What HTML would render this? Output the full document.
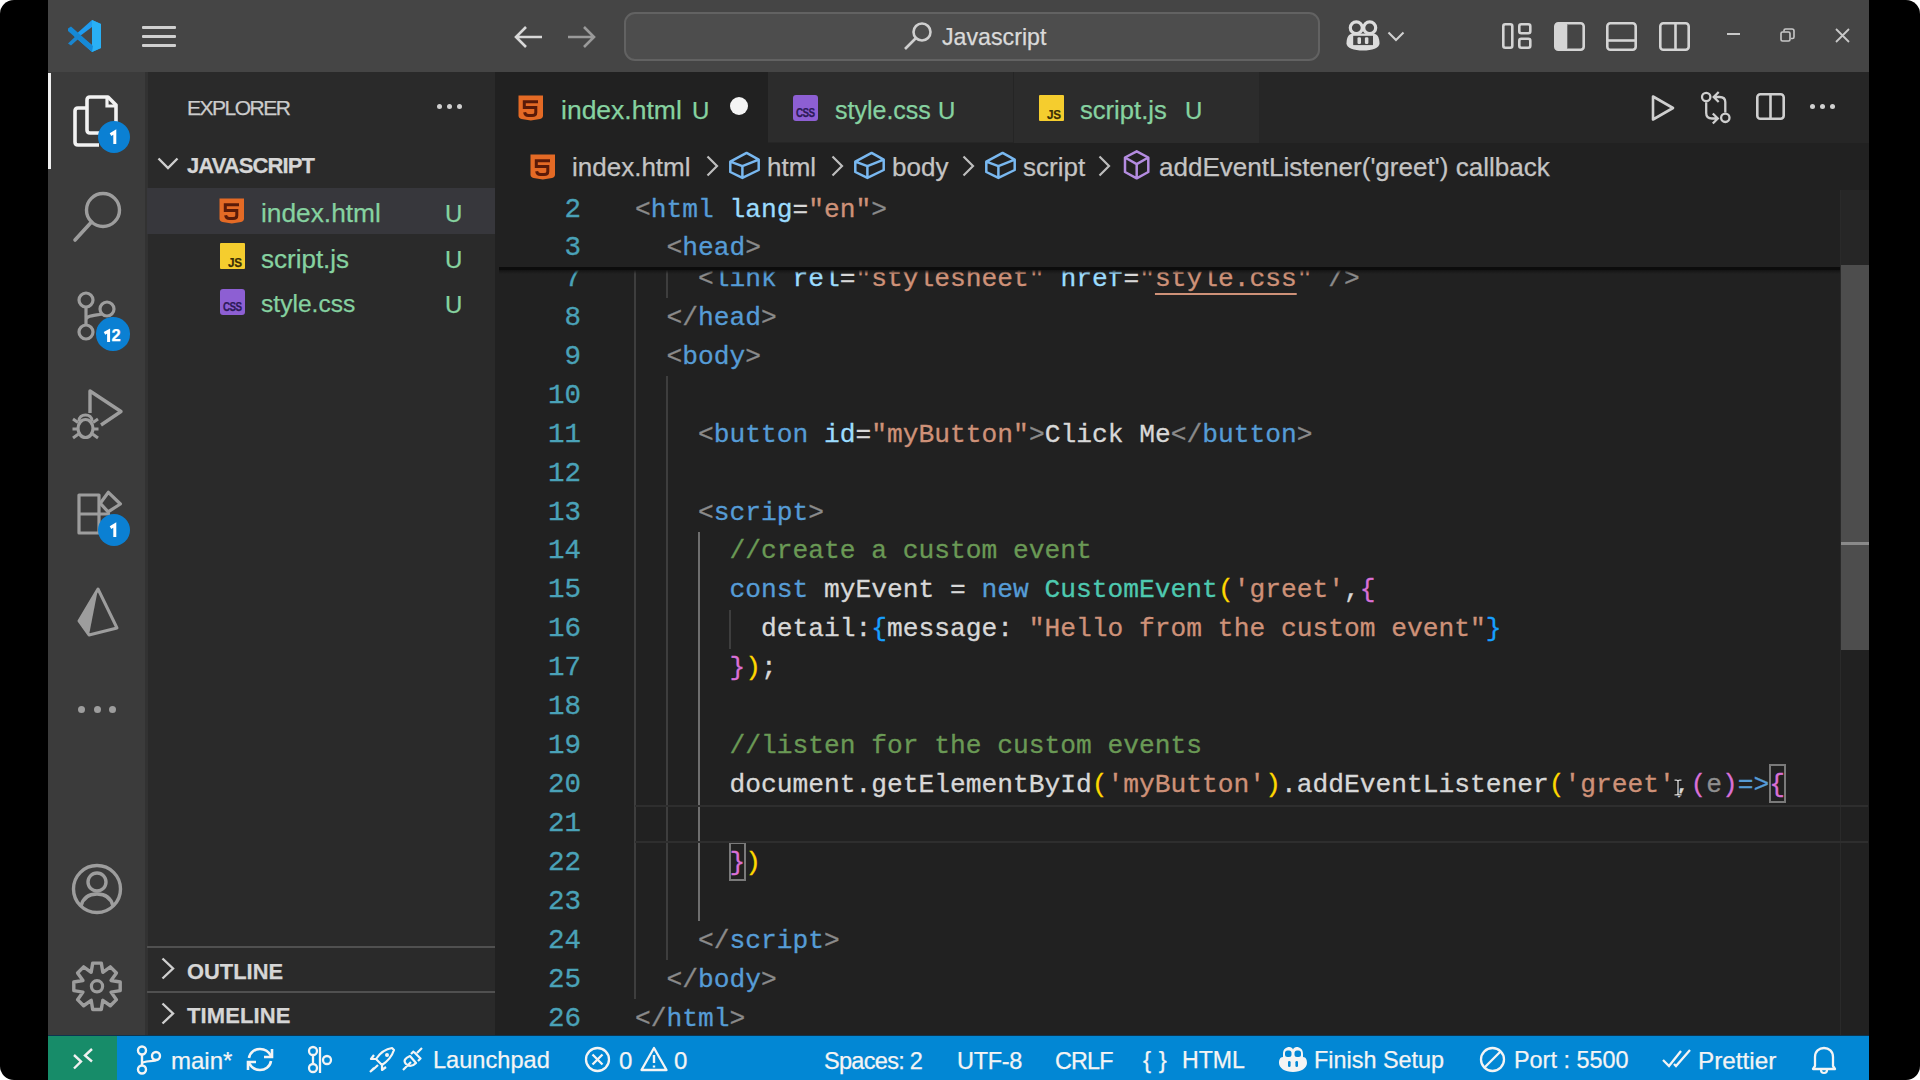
<!DOCTYPE html>
<html><head><meta charset="utf-8">
<style>
*{margin:0;padding:0;box-sizing:border-box}
html,body{width:1920px;height:1080px;overflow:hidden;background:#fff}
body{position:relative;font-family:"Liberation Sans",sans-serif}
.abs{position:absolute}
#frame{position:absolute;left:0;top:0;width:1920px;height:1080px;background:#000;border-radius:14px;overflow:hidden}
#title{left:48px;top:0;width:1821px;height:72px;background:#454545}
#act{left:48px;top:72px;width:99px;height:964px;background:#3b3b3b}
#side{left:147px;top:72px;width:348px;height:964px;background:#2a2a2a}
#tabs{left:495px;top:72px;width:1374px;height:71px;background:#262626}
#editor{left:495px;top:143px;width:1374px;height:893px;background:#212121}
#status{left:48px;top:1036px;width:1821px;height:44px;background:#0287d4}
.t{position:absolute;white-space:nowrap;line-height:1;-webkit-text-stroke:0.25px}
svg{position:absolute;overflow:visible}
.code{position:absolute;font-family:"Liberation Mono",monospace;font-size:26.26px;white-space:pre;line-height:39px;height:39px;margin-top:0.5px;-webkit-text-stroke:0.3px}
.ln{position:absolute;font-family:"Liberation Mono",monospace;font-size:27.5px;white-space:pre;line-height:39px;height:39px;text-align:right;width:80px;left:501px;margin-top:-0.5px;color:#4aa2b8;-webkit-text-stroke:0.3px}
.p{color:#8a8a8a}.tg{color:#569cd6}.at{color:#9cdcfe}.s{color:#ce9178}.w{color:#d8d8d8}.c{color:#6a9955}.k{color:#569cd6}.cl{color:#4ec9b0}.y{color:#ffd700}.m{color:#da70d6}.b{color:#179fff}.g{color:#8f8f8f}.su{color:#ce9178;text-decoration:underline;text-decoration-thickness:2px;text-underline-offset:7px;text-decoration-skip-ink:none}
</style></head><body>
<div id="frame">
<div id="title" class="abs"></div>
<div id="act" class="abs"></div>
<!-- TITLE BAR -->
<svg style="left:66px;top:19px" width="36" height="34" viewBox="0 0 36 34">
 <path d="M26 1 L35 5 L35 29 L26 33 L8 17 Z" fill="#1f9cf0"/>
 <path d="M26 1 L35 5 L35 29 L26 33 Z" fill="#29b0f5"/>
 <path d="M26 8 L26 26 L14 17 Z" fill="#474747"/>
 <path d="M2 9.5 L5 7.5 L27 27 L26 33 L2 12 Z" fill="#1589d6"/>
 <path d="M2 24.5 L5 26.5 L15 17.5 L12 15 Z" fill="#1a86cf"/>
</svg>
<div class="abs" style="left:142px;top:26px;width:34px;height:3px;background:#d0d0d0;border-radius:1px"></div>
<div class="abs" style="left:142px;top:35px;width:34px;height:3px;background:#d0d0d0;border-radius:1px"></div>
<div class="abs" style="left:142px;top:44px;width:34px;height:3px;background:#d0d0d0;border-radius:1px"></div>
<svg style="left:514px;top:25px" width="30" height="24" viewBox="0 0 30 24"><path d="M28 12 H3 M12 2 L2 12 L12 22" stroke="#d8d8d8" stroke-width="2.6" fill="none"/></svg>
<svg style="left:567px;top:25px" width="30" height="24" viewBox="0 0 30 24"><path d="M1 12 H26 M17 2 L27 12 L17 22" stroke="#9a9a9a" stroke-width="2.6" fill="none"/></svg>
<div class="abs" style="left:624px;top:12px;width:696px;height:49px;background:#4d4d4d;border:2px solid #626262;border-radius:11px"></div>
<svg style="left:903px;top:21px" width="30" height="30" viewBox="0 0 30 30"><circle cx="19" cy="11" r="8.5" stroke="#cfcfcf" stroke-width="2.6" fill="none"/><path d="M13 17 L2 28" stroke="#cfcfcf" stroke-width="2.6"/></svg>
<div class="t" style="left:942px;top:26px;font-size:23.2px;color:#dadada">Javascript</div>
<svg style="left:1345px;top:19px" width="36" height="33" viewBox="0 0 36 33">
 <path d="M1.5 24.5 C1.5 18 4 14.5 8 14.5 H28 C32 14.5 34.5 18 34.5 24.5 C34.5 29 27 31.5 18 31.5 C9 31.5 1.5 29 1.5 24.5 Z" fill="#dcdcdc"/>
 <ellipse cx="11.3" cy="8.8" rx="6" ry="5.9" stroke="#dcdcdc" stroke-width="3.2" fill="#454545"/>
 <ellipse cx="24.7" cy="8.8" rx="6" ry="5.9" stroke="#dcdcdc" stroke-width="3.2" fill="#454545"/>
 <rect x="8.2" y="16.8" width="19.8" height="9.3" fill="#454545"/>
 <rect x="12.5" y="18.3" width="3.5" height="6.7" rx="1.2" fill="#dcdcdc"/>
 <rect x="19.9" y="18.3" width="3.5" height="6.7" rx="1.2" fill="#dcdcdc"/>
</svg>
<svg style="left:1387px;top:31px" width="18" height="11" viewBox="0 0 18 11"><path d="M1.5 1.5 L9 9 L16.5 1.5" stroke="#d0d0d0" stroke-width="2.1" fill="none"/></svg>
<svg style="left:1502px;top:23px" width="30" height="26" viewBox="0 0 30 26"><rect x="1.3" y="1.3" width="9" height="23.4" rx="2" stroke="#d4d4d4" stroke-width="2.6" fill="none"/><rect x="17.3" y="1.3" width="11" height="9" rx="2" stroke="#d4d4d4" stroke-width="2.6" fill="none"/><rect x="17.3" y="15.7" width="11" height="9" rx="2" stroke="#d4d4d4" stroke-width="2.6" fill="none"/></svg>
<svg style="left:1554px;top:22px" width="31" height="29" viewBox="0 0 31 29"><rect x="1.3" y="1.3" width="28.4" height="26.4" rx="3" stroke="#d4d4d4" stroke-width="2.6" fill="none"/><rect x="1.3" y="1.3" width="12" height="26.4" rx="2" fill="#d4d4d4"/></svg>
<svg style="left:1606px;top:22px" width="31" height="29" viewBox="0 0 31 29"><rect x="1.3" y="1.3" width="28.4" height="26.4" rx="3" stroke="#d4d4d4" stroke-width="2.6" fill="none"/><path d="M1.3 18.5 H29.7" stroke="#d4d4d4" stroke-width="2.6"/></svg>
<svg style="left:1659px;top:22px" width="31" height="29" viewBox="0 0 31 29"><rect x="1.3" y="1.3" width="28.4" height="26.4" rx="3" stroke="#d4d4d4" stroke-width="2.6" fill="none"/><path d="M16.5 1.3 V27.7" stroke="#d4d4d4" stroke-width="2.6"/></svg>
<div class="abs" style="left:1727px;top:33px;width:13px;height:2px;background:#c8c8c8"></div>
<svg style="left:1780px;top:28px" width="15" height="14" viewBox="0 0 15 14"><rect x="1" y="4" width="9" height="9" rx="1.5" stroke="#c8c8c8" stroke-width="1.6" fill="none"/><path d="M4 3.5 V2.5 C4 1.5 4.5 1 5.5 1 H12 C13 1 14 2 14 3 V9 C14 10 13.5 10.5 12.5 10.5 H11" stroke="#c8c8c8" stroke-width="1.6" fill="none"/></svg>
<svg style="left:1835px;top:28px" width="15" height="15" viewBox="0 0 15 15"><path d="M1 1 L14 14 M14 1 L1 14" stroke="#c8c8c8" stroke-width="1.8"/></svg>

<div id="side" class="abs"></div><div class="abs" style="left:145px;top:72px;width:3px;height:964px;background:#323232"></div>
<!-- ACTIVITY BAR -->
<div class="abs" style="left:48px;top:73px;width:3px;height:96px;background:#f0f0f0"></div>
<svg style="left:72px;top:93px" width="50" height="56" viewBox="0 0 50 56">
 <path d="M15 15 H6 C4 15 3 16 3 18 V49 C3 51 4 52 6 52 H27" stroke="#f2f2f2" stroke-width="3.6" fill="none" stroke-linejoin="round"/>
 <path d="M18 4 H36 L44 12 V37 C44 39 43 40 41 40 H18 C16 40 15 39 15 37 V7 C15 5 16 4 18 4 Z" stroke="#f2f2f2" stroke-width="3.6" fill="none" stroke-linejoin="round"/>
 <path d="M35 5 V13 H43" stroke="#f2f2f2" stroke-width="3.2" fill="none"/>
</svg>
<div class="abs" style="left:97.5px;top:121px;width:32px;height:32px;border-radius:50%;background:#0b80d3"></div>
<svg style="left:108px;top:130px" width="12" height="16" viewBox="0 0 12 16"><path d="M2.5 4.6 L6.8 2 V14" stroke="#fff" stroke-width="3" fill="none" stroke-linejoin="miter"/></svg>
<svg style="left:72px;top:190px" width="52" height="54" viewBox="0 0 52 54"><circle cx="31" cy="20" r="16.5" stroke="#9d9d9d" stroke-width="3.4" fill="none"/><path d="M19.5 32 L3 50" stroke="#9d9d9d" stroke-width="3.6" stroke-linecap="round"/></svg>
<svg style="left:74px;top:290px" width="48" height="54" viewBox="0 0 48 54">
 <circle cx="12" cy="10" r="7" stroke="#9d9d9d" stroke-width="3.2" fill="none"/>
 <circle cx="33" cy="19" r="7" stroke="#9d9d9d" stroke-width="3.2" fill="none"/>
 <circle cx="12" cy="42" r="7" stroke="#9d9d9d" stroke-width="3.2" fill="none"/>
 <path d="M12 17 V35 M12 30 C12 26 17 26 28 24" stroke="#9d9d9d" stroke-width="3.2" fill="none"/>
</svg>
<div class="abs" style="left:96px;top:317px;width:33.5px;height:33.5px;border-radius:50%;background:#0b80d3"></div>
<svg style="left:102px;top:328.5px" width="12" height="16" viewBox="0 0 12 16"><path d="M2.5 4.4 L6.6 2 V13" stroke="#fff" stroke-width="3" fill="none"/></svg><div class="t" style="left:111.5px;top:327px;font-size:16.5px;font-weight:bold;color:#fff">2</div>
<svg style="left:70px;top:388px" width="56" height="54" viewBox="0 0 56 54">
 <path d="M20 25 V3 L51 23.5 L31 37" stroke="#9d9d9d" stroke-width="3.4" fill="none" stroke-linejoin="round"/>
 <path d="M9 33 C9 29 12 27 15.5 27 C19 27 22 29 22 33" stroke="#9d9d9d" stroke-width="3" fill="none"/>
 <ellipse cx="15.5" cy="40.5" rx="7.5" ry="9" stroke="#9d9d9d" stroke-width="3.2" fill="none"/>
 <path d="M3 31 L8 34.5 M2.5 41 H8 M3 50 L8.5 46 M28 31 L23 34.5 M28.5 41 H23 M28 50 L22.5 46" stroke="#9d9d9d" stroke-width="3" fill="none"/>
</svg>
<svg style="left:74px;top:488px" width="52" height="52" viewBox="0 0 52 52">
 <path d="M5 7 H25 V45 H5 Z M5 26 H25 M25 26 H36" stroke="#9d9d9d" stroke-width="3.2" fill="none" stroke-linejoin="round"/>
 <path d="M34.4 4.3 L46.4 16 L34.1 23.8 L26.3 15.3 Z" stroke="#9d9d9d" stroke-width="3.2" fill="none" stroke-linejoin="round"/>
</svg>
<div class="abs" style="left:97.5px;top:514px;width:32px;height:32px;border-radius:50%;background:#0b80d3"></div>
<svg style="left:108px;top:523px" width="12" height="16" viewBox="0 0 12 16"><path d="M2.5 4.6 L6.8 2 V14" stroke="#fff" stroke-width="3" fill="none" stroke-linejoin="miter"/></svg>
<svg style="left:76px;top:587px" width="44" height="52" viewBox="0 0 44 52">
 <path d="M22 2 L41 41 L13 48 L3 34 Z" stroke="#9d9d9d" stroke-width="3" fill="none" stroke-linejoin="round"/>
 <path d="M22 2 L3 34 L13 48 Z" fill="#9d9d9d"/>
</svg>
<div class="abs" style="left:78px;top:706px;width:7px;height:7px;border-radius:50%;background:#9d9d9d"></div>
<div class="abs" style="left:94px;top:706px;width:7px;height:7px;border-radius:50%;background:#9d9d9d"></div>
<div class="abs" style="left:109px;top:706px;width:7px;height:7px;border-radius:50%;background:#9d9d9d"></div>
<svg style="left:71px;top:863px" width="52" height="52" viewBox="0 0 52 52">
 <circle cx="26" cy="26" r="23.5" stroke="#9d9d9d" stroke-width="3.4" fill="none"/>
 <circle cx="26" cy="19" r="9" stroke="#9d9d9d" stroke-width="3.4" fill="none"/>
 <path d="M10 43 C12 35 18 31 26 31 C34 31 40 35 42 43" stroke="#9d9d9d" stroke-width="3.4" fill="none"/>
</svg>
<svg style="left:70px;top:960px" width="54" height="54" viewBox="0 0 54 54"><path d="M21.18 12.26 L22.70 3.10 L31.30 3.10 L32.82 12.26 L40.37 6.85 L46.45 12.93 L41.04 20.48 L50.20 22.00 L50.20 30.60 L41.04 32.12 L46.45 39.67 L40.37 45.75 L32.82 40.34 L31.30 49.50 L22.70 49.50 L21.18 40.34 L13.63 45.75 L7.55 39.67 L12.96 32.12 L3.80 30.60 L3.80 22.00 L12.96 20.48 L7.55 12.93 L13.63 6.85 Z" stroke="#9d9d9d" stroke-width="3.4" fill="none" stroke-linejoin="round"/><circle cx="27" cy="26.3" r="5.6" stroke="#9d9d9d" stroke-width="3.2" fill="none"/></svg>

<div id="tabs" class="abs"></div>
<!-- SIDEBAR -->
<div class="t" style="left:187px;top:97px;font-size:21px;letter-spacing:-1.5px;color:#cccccc">EXPLORER</div>
<div class="abs" style="left:437px;top:104px;width:5px;height:5px;border-radius:50%;background:#d0d0d0"></div>
<div class="abs" style="left:447px;top:104px;width:5px;height:5px;border-radius:50%;background:#d0d0d0"></div>
<div class="abs" style="left:457px;top:104px;width:5px;height:5px;border-radius:50%;background:#d0d0d0"></div>
<svg style="left:157px;top:157px" width="22" height="14" viewBox="0 0 22 14"><path d="M1.5 1.5 L11 11 L20.5 1.5" stroke="#cfcfcf" stroke-width="2.4" fill="none"/></svg>
<div class="t" style="left:187px;top:155px;font-size:22px;font-weight:bold;letter-spacing:-0.9px;color:#d6d6d6">JAVASCRIPT</div>
<div class="abs" style="left:147px;top:188px;width:348px;height:46px;background:#37373c"></div>
<svg style="left:219px;top:198px" width="26" height="26" viewBox="0 0 26 26"><path d="M0.5 0.5 H25 V20.5 C25 22.5 24 23.5 22 24 L12.8 25.5 L3.5 24 C1.5 23.5 0.5 22.5 0.5 20.5 Z" fill="#e46a25"/><path d="M20 6.8 H6.3 V12.6 H17.8 V17.5 C17.8 19.5 16.5 20.6 14 20.6 H10.5 C8.3 20.6 7 19.5 6.6 17.3" stroke="#5a1a08" stroke-width="3" fill="none"/></svg><div class="t" style="left:261px;top:200px;font-size:26.3px;color:#86d2a0">index.html</div><div class="t" style="left:445px;top:202px;font-size:24px;color:#86d2a0">U</div><div class="abs" style="left:220px;top:243px;width:25px;height:26px;background:#f5cd2e;border-radius:1px"></div><div class="t" style="left:228px;top:256px;font-size:13px;font-weight:bold;color:#3a2e05;letter-spacing:-0.2px;transform:scaleX(0.9);transform-origin:left">JS</div><div class="t" style="left:261px;top:246px;font-size:26px;color:#86d2a0">script.js</div><div class="t" style="left:445px;top:248px;font-size:24px;color:#86d2a0">U</div><div class="abs" style="left:220px;top:289px;width:25px;height:26px;background:#8d5fd3;border-radius:3px"></div><div class="t" style="left:223px;top:300px;font-size:13px;font-weight:bold;color:#2c1a58;letter-spacing:-0.8px;transform:scaleX(0.76);transform-origin:left">CSS</div><div class="t" style="left:261px;top:291.5px;font-size:24.6px;color:#86d2a0">style.css</div><div class="t" style="left:445px;top:293px;font-size:24px;color:#86d2a0">U</div>
<div class="abs" style="left:147px;top:946px;width:348px;height:2px;background:#505050"></div>
<svg style="left:161px;top:957px" width="14" height="23" viewBox="0 0 14 23"><path d="M1.5 1.5 L12 11.5 L1.5 21.5" stroke="#cfcfcf" stroke-width="2.4" fill="none"/></svg>
<div class="t" style="left:187px;top:961px;font-size:21.9px;font-weight:bold;letter-spacing:0px;color:#d6d6d6">OUTLINE</div>
<div class="abs" style="left:147px;top:991px;width:348px;height:2px;background:#505050"></div>
<svg style="left:161px;top:1002px" width="14" height="23" viewBox="0 0 14 23"><path d="M1.5 1.5 L12 11.5 L1.5 21.5" stroke="#cfcfcf" stroke-width="2.4" fill="none"/></svg>
<div class="t" style="left:187px;top:1005px;font-size:22px;font-weight:bold;letter-spacing:0.1px;color:#d6d6d6">TIMELINE</div>

<div id="editor" class="abs"></div>
<!-- EDITOR -->
<div class="abs" style="left:635px;top:804.52px;width:1233px;height:38.94px;border-top:2px solid #2e2e2e;border-bottom:2px solid #2e2e2e;z-index:2"></div>
<div class="abs" style="left:634px;top:267.90px;width:2px;height:731.32px;background:#3e3e3e"></div>
<div class="abs" style="left:666px;top:267.90px;width:2px;height:30.40px;background:#3e3e3e"></div>
<div class="abs" style="left:666px;top:376.18px;width:2px;height:584.10px;background:#3e3e3e"></div>
<div class="abs" style="left:697.5px;top:531.94px;width:2px;height:389.40px;background:#6e6e6e"></div>
<div class="abs" style="left:729px;top:609.82px;width:2px;height:38.94px;background:#3e3e3e"></div>
<div class="ln" style="top:259.36px">7</div>
<div class="code" style="left:635.0px;top:259.36px"><span class="w">    </span><span class="p">&lt;</span><span class="tg">link</span><span class="w"> </span><span class="at">rel</span><span class="w">=</span><span class="s">"stylesheet"</span><span class="w"> </span><span class="at">href</span><span class="w">=</span><span class="s">"</span><span class="su">style.css</span><span class="s">"</span><span class="w"> </span><span class="p">/&gt;</span></div>
<div class="ln" style="top:298.30px">8</div>
<div class="code" style="left:635.0px;top:298.30px"><span class="w">  </span><span class="p">&lt;/</span><span class="tg">head</span><span class="p">&gt;</span></div>
<div class="ln" style="top:337.24px">9</div>
<div class="code" style="left:635.0px;top:337.24px"><span class="w">  </span><span class="p">&lt;</span><span class="tg">body</span><span class="p">&gt;</span></div>
<div class="ln" style="top:376.18px">10</div>
<div class="ln" style="top:415.12px">11</div>
<div class="code" style="left:635.0px;top:415.12px"><span class="w">    </span><span class="p">&lt;</span><span class="tg">button</span><span class="w"> </span><span class="at">id</span><span class="w">=</span><span class="s">"myButton"</span><span class="p">&gt;</span><span class="w">Click Me</span><span class="p">&lt;/</span><span class="tg">button</span><span class="p">&gt;</span></div>
<div class="ln" style="top:454.06px">12</div>
<div class="ln" style="top:493.00px">13</div>
<div class="code" style="left:635.0px;top:493.00px"><span class="w">    </span><span class="p">&lt;</span><span class="tg">script</span><span class="p">&gt;</span></div>
<div class="ln" style="top:531.94px">14</div>
<div class="code" style="left:635.0px;top:531.94px"><span class="w">      </span><span class="c">//create a custom event</span></div>
<div class="ln" style="top:570.88px">15</div>
<div class="code" style="left:635.0px;top:570.88px"><span class="w">      </span><span class="k">const</span><span class="w"> myEvent = </span><span class="k">new</span><span class="w"> </span><span class="cl">CustomEvent</span><span class="y">(</span><span class="s">'greet'</span><span class="w">,</span><span class="m">{</span></div>
<div class="ln" style="top:609.82px">16</div>
<div class="code" style="left:635.0px;top:609.82px"><span class="w">        detail:</span><span class="b">{</span><span class="w">message: </span><span class="s">"Hello from the custom event"</span><span class="b">}</span></div>
<div class="ln" style="top:648.76px">17</div>
<div class="code" style="left:635.0px;top:648.76px"><span class="w">      </span><span class="m">}</span><span class="y">)</span><span class="w">;</span></div>
<div class="ln" style="top:687.70px">18</div>
<div class="ln" style="top:726.64px">19</div>
<div class="code" style="left:635.0px;top:726.64px"><span class="w">      </span><span class="c">//listen for the custom events</span></div>
<div class="ln" style="top:765.58px">20</div>
<div class="code" style="left:635.0px;top:765.58px"><span class="w">      document.getElementById</span><span class="y">(</span><span class="s">'myButton'</span><span class="y">)</span><span class="w">.addEventListener</span><span class="y">(</span><span class="s">'greet'</span><span class="w">,</span><span class="m">(</span><span class="g">e</span><span class="m">)</span><span class="k">=&gt;</span><span class="m">{</span></div>
<div class="ln" style="top:804.52px">21</div>
<div class="ln" style="top:843.46px">22</div>
<div class="code" style="left:635.0px;top:843.46px"><span class="w">      </span><span class="m">}</span><span class="y">)</span></div>
<div class="ln" style="top:882.40px">23</div>
<div class="ln" style="top:921.34px">24</div>
<div class="code" style="left:635.0px;top:921.34px"><span class="w">    </span><span class="p">&lt;/</span><span class="tg">script</span><span class="p">&gt;</span></div>
<div class="ln" style="top:960.28px">25</div>
<div class="code" style="left:635.0px;top:960.28px"><span class="w">  </span><span class="p">&lt;/</span><span class="tg">body</span><span class="p">&gt;</span></div>
<div class="ln" style="top:999.22px">26</div>
<div class="code" style="left:635.0px;top:999.22px"><span class="p">&lt;/</span><span class="tg">html</span><span class="p">&gt;</span></div>
<div class="abs" style="left:1768.93px;top:764.4px;width:16.76px;height:38.94px;border:2px solid #7a7a7a"></div>
<div class="abs" style="left:729.04px;top:842.3px;width:16.76px;height:38.94px;border:2px solid #7a7a7a"></div>
<div class="abs" style="left:495px;top:190px;width:1345px;height:78px;background:#212121"></div>
<div class="ln" style="top:190.00px">2</div>
<div class="code" style="left:635.0px;top:190.00px"><span class="p">&lt;</span><span class="tg">html</span><span class="w"> </span><span class="at">lang</span><span class="w">=</span><span class="s">"en"</span><span class="p">&gt;</span></div>
<div class="ln" style="top:228.94px">3</div>
<div class="code" style="left:635.0px;top:228.94px"><span class="w">  </span><span class="p">&lt;</span><span class="tg">head</span><span class="p">&gt;</span></div>
<div class="abs" style="left:499px;top:267px;width:1341px;height:3px;background:#0c0c0c"></div>
<div class="abs" style="left:499px;top:270px;width:1341px;height:4px;background:linear-gradient(#141414,rgba(20,20,20,0))"></div>
<div class="abs" style="left:1840px;top:190px;width:29px;height:846px;border-left:1px solid #2a2a2a"></div>
<div class="abs" style="left:1841px;top:190px;width:28px;height:75px;background:#262626"></div>
<div class="abs" style="left:1841px;top:265px;width:28px;height:385px;background:#4d4d4d"></div>
<div class="abs" style="left:1841px;top:542px;width:28px;height:3px;background:#8a8a8a"></div>
<svg style="left:1673px;top:779px" width="10" height="17" viewBox="0 0 10 17"><path d="M1.5 1.2 H3.5 C4.3 1.2 5 1.8 5 2.6 V14.4 C5 15.2 4.3 15.8 3.5 15.8 H1.5 M8.5 1.2 H6.5 C5.7 1.2 5 1.8 5 2.6 M5 14.4 C5 15.2 5.7 15.8 6.5 15.8 H8.5" stroke="#111" stroke-width="2.6" fill="none"/><path d="M1.5 1.2 H3.5 C4.3 1.2 5 1.8 5 2.6 V14.4 C5 15.2 4.3 15.8 3.5 15.8 H1.5 M8.5 1.2 H6.5 C5.7 1.2 5 1.8 5 2.6 M5 14.4 C5 15.2 5.7 15.8 6.5 15.8 H8.5" stroke="#e0e0e0" stroke-width="1.3" fill="none"/></svg>
<!-- /EDITOR -->
<!-- TABS -->
<div class="abs" style="left:495px;top:72px;width:273px;height:71px;background:#212121"></div>
<div class="abs" style="left:768px;top:72px;width:245px;height:71px;background:#2c2c2c;border-bottom:1px solid #262626"></div>
<div class="abs" style="left:1013px;top:72px;width:1px;height:71px;background:#252525"></div>
<div class="abs" style="left:1014px;top:72px;width:245px;height:71px;background:#2c2c2c"></div>
<svg style="left:518px;top:95px" width="26" height="26" viewBox="0 0 26 26"><path d="M0.5 0.5 H25 V20.5 C25 22.5 24 23.5 22 24 L12.8 25.5 L3.5 24 C1.5 23.5 0.5 22.5 0.5 20.5 Z" fill="#e46a25"/><path d="M20 6.8 H6.3 V12.6 H17.8 V17.5 C17.8 19.5 16.5 20.6 14 20.6 H10.5 C8.3 20.6 7 19.5 6.6 17.3" stroke="#5a1a08" stroke-width="3" fill="none"/></svg><div class="t" style="left:561px;top:96.5px;font-size:26.5px;color:#86d2a0">index.html</div><div class="t" style="left:692px;top:98.5px;font-size:24px;color:#86d2a0">U</div><div class="abs" style="left:730px;top:97px;width:18px;height:18px;border-radius:50%;background:#f4f4f4"></div><div class="abs" style="left:793px;top:95px;width:25px;height:26px;background:#8d5fd3;border-radius:3px"></div><div class="t" style="left:796px;top:106px;font-size:13px;font-weight:bold;color:#2c1a58;letter-spacing:-0.8px;transform:scaleX(0.76);transform-origin:left">CSS</div><div class="t" style="left:835px;top:97.5px;font-size:25px;color:#86d2a0">style.css</div><div class="t" style="left:938px;top:98.5px;font-size:24px;color:#86d2a0">U</div><div class="abs" style="left:1039px;top:95px;width:25px;height:26px;background:#f5cd2e;border-radius:1px"></div><div class="t" style="left:1047px;top:108px;font-size:13px;font-weight:bold;color:#3a2e05;letter-spacing:-0.2px;transform:scaleX(0.9);transform-origin:left">JS</div><div class="t" style="left:1080px;top:97.5px;font-size:25.6px;color:#86d2a0">script.js</div><div class="t" style="left:1185px;top:98.5px;font-size:24px;color:#86d2a0">U</div>
<svg style="left:1650px;top:94px" width="26" height="28" viewBox="0 0 26 28"><path d="M3 2.5 L23 14 L3 25.5 Z" stroke="#cfcfcf" stroke-width="2.6" fill="none" stroke-linejoin="round"/></svg>
<svg style="left:1698px;top:88px" width="36" height="40" viewBox="0 0 36 40"><circle cx="8.2" cy="9.0" r="4.2" stroke="#cfcfcf" stroke-width="2.3" fill="none"/><circle cx="27.3" cy="29.8" r="4.2" stroke="#cfcfcf" stroke-width="2.3" fill="none"/><path d="M8.2 14.2 V25.0 C8.2 29.0 10.0 30.5 14.0 30.5 H20.0 M14.8 25.5 L19.8 30.5 L14.8 35.5 M27.3 24.6 V14.0 C27.3 10.5 25.5 9.0 21.5 9.0 H15.5 M20.7 4.0 L15.7 9.0 L20.7 14.0" stroke="#cfcfcf" stroke-width="2.3" fill="none"/></svg>
<svg style="left:1756px;top:93px" width="29" height="27" viewBox="0 0 29 27"><rect x="1.3" y="1.3" width="26.4" height="24.4" rx="3" stroke="#cfcfcf" stroke-width="2.6" fill="none"/><path d="M14.5 1.3 V25.7" stroke="#cfcfcf" stroke-width="2.6"/></svg>
<div class="abs" style="left:1810px;top:104px;width:5px;height:5px;border-radius:50%;background:#d0d0d0"></div>
<div class="abs" style="left:1820px;top:104px;width:5px;height:5px;border-radius:50%;background:#d0d0d0"></div>
<div class="abs" style="left:1830px;top:104px;width:5px;height:5px;border-radius:50%;background:#d0d0d0"></div>
<!-- BREADCRUMB -->
<svg style="left:530px;top:154px" width="26" height="26" viewBox="0 0 26 26"><path d="M0.5 0.5 H25 V20.5 C25 22.5 24 23.5 22 24 L12.8 25.5 L3.5 24 C1.5 23.5 0.5 22.5 0.5 20.5 Z" fill="#e46a25"/><path d="M20 6.8 H6.3 V12.6 H17.8 V17.5 C17.8 19.5 16.5 20.6 14 20.6 H10.5 C8.3 20.6 7 19.5 6.6 17.3" stroke="#5a1a08" stroke-width="3" fill="none"/></svg><div class="t" style="left:572px;top:154px;font-size:26px;color:#c4c4c4">index.html</div><svg style="left:706px;top:155px" width="13" height="22" viewBox="0 0 13 22"><path d="M1.5 1.5 L11 11 L1.5 20.5" stroke="#bdbdbd" stroke-width="2.2" fill="none"/></svg><svg style="left:727px;top:149px" width="36" height="32" viewBox="0 0 36 32"><path d="M19.6 3.9 L31.7 10.6 V21.0 L15.4 28.9 L3.3 23.0 V12.7 Z M3.3 12.7 L15.4 17.2 L31.7 10.6 M15.4 17.2 V28.9" stroke="#79b8f0" stroke-width="2.5" fill="none" stroke-linejoin="round"/></svg><div class="t" style="left:767px;top:154px;font-size:26px;color:#c4c4c4">html</div><svg style="left:831px;top:155px" width="13" height="22" viewBox="0 0 13 22"><path d="M1.5 1.5 L11 11 L1.5 20.5" stroke="#bdbdbd" stroke-width="2.2" fill="none"/></svg><svg style="left:852px;top:149px" width="36" height="32" viewBox="0 0 36 32"><path d="M19.6 3.9 L31.7 10.6 V21.0 L15.4 28.9 L3.3 23.0 V12.7 Z M3.3 12.7 L15.4 17.2 L31.7 10.6 M15.4 17.2 V28.9" stroke="#79b8f0" stroke-width="2.5" fill="none" stroke-linejoin="round"/></svg><div class="t" style="left:892px;top:154px;font-size:26px;color:#c4c4c4">body</div><svg style="left:962px;top:155px" width="13" height="22" viewBox="0 0 13 22"><path d="M1.5 1.5 L11 11 L1.5 20.5" stroke="#bdbdbd" stroke-width="2.2" fill="none"/></svg><svg style="left:983px;top:149px" width="36" height="32" viewBox="0 0 36 32"><path d="M19.6 3.9 L31.7 10.6 V21.0 L15.4 28.9 L3.3 23.0 V12.7 Z M3.3 12.7 L15.4 17.2 L31.7 10.6 M15.4 17.2 V28.9" stroke="#79b8f0" stroke-width="2.5" fill="none" stroke-linejoin="round"/></svg><div class="t" style="left:1023px;top:154px;font-size:26px;color:#c4c4c4">script</div><svg style="left:1098px;top:155px" width="13" height="22" viewBox="0 0 13 22"><path d="M1.5 1.5 L11 11 L1.5 20.5" stroke="#bdbdbd" stroke-width="2.2" fill="none"/></svg><svg style="left:1122px;top:148px" width="30" height="34" viewBox="0 0 30 34"><path d="M14.7 3.3 L26.3 9.5 V24 L14.7 30.3 L3 24 V9.5 Z M3 9.5 L14.7 16.2 L26.3 9.5 M14.7 16.2 V30.3" stroke="#b48ce0" stroke-width="2.5" fill="none" stroke-linejoin="round"/></svg><div class="t" style="left:1159px;top:154px;font-size:26.05px;color:#c4c4c4">addEventListener(&#39;greet&#39;) callback</div>
<div id="status" class="abs"></div><div class="abs" style="left:48px;top:1035px;width:1821px;height:1px;background:#0d3550"></div>
<!-- STATUS -->
<div class="abs" style="left:48px;top:1036px;width:69px;height:44px;background:#178c69"></div>
<svg style="left:72px;top:1046px" width="22" height="26" viewBox="0 0 22 26"><path d="M2 9 L9 15.5 L2 22.5 M20 3 L13 9.5 L20 15.5" stroke="#f0f0f0" stroke-width="2.4" fill="none"/></svg>
<svg style="left:136px;top:1045px" width="26" height="30" viewBox="0 0 26 30">
 <circle cx="6" cy="5.5" r="4" stroke="#f4f4f4" stroke-width="2.4" fill="none"/>
 <circle cx="20" cy="11" r="4" stroke="#f4f4f4" stroke-width="2.4" fill="none"/>
 <circle cx="6" cy="24.5" r="4" stroke="#f4f4f4" stroke-width="2.4" fill="none"/>
 <path d="M6 9.5 V20.5 M6 19 C6 15 19 17 20 15" stroke="#f4f4f4" stroke-width="2.4" fill="none"/>
</svg>
<div class="t" style="left:171px;top:1049px;font-size:24px;color:#f4f4f4">main*</div>
<svg style="left:245px;top:1047px" width="30" height="25" viewBox="0 0 30 25"><path d="M4 11 C5 5 10 2 15 2 C20 2 24 5 26 9 M26 14 C25 20 20 23 15 23 C10 23 6 20 4 16" stroke="#f4f4f4" stroke-width="2.6" fill="none"/><path d="M27 2 V10 H19 M3 23 V15 H11" stroke="#f4f4f4" stroke-width="2.6" fill="none"/></svg>
<svg style="left:307px;top:1046px" width="27" height="28" viewBox="0 0 27 28">
 <circle cx="6" cy="5" r="4" stroke="#f4f4f4" stroke-width="2.3" fill="none"/>
 <circle cx="6" cy="22" r="4" stroke="#f4f4f4" stroke-width="2.3" fill="none"/>
 <circle cx="20" cy="14" r="4" stroke="#f4f4f4" stroke-width="2.3" fill="none"/>
 <path d="M6 9 V18 M13 1 V27" stroke="#f4f4f4" stroke-width="2.3" fill="none"/>
</svg>
<svg style="left:368px;top:1046px" width="58" height="28" viewBox="0 0 58 28">
 <path d="M24 2 C17 3 12 7 8 13 L14 19 C20 15 24 10 26 4 Z M8 13 L3 13 L6 9 M14 19 L14 24 L18 21 M2 26 L6 22 M10 19 C8 21 6 23 3 25" stroke="#f4f4f4" stroke-width="2.2" fill="none" stroke-linejoin="round"/>
 <circle cx="19" cy="9" r="2" fill="#f4f4f4"/>
 <path d="M54 2 L49 7 M43 16 L35 24 M46 6 L53 13 M42 10 L48 17 C45 20 41 21 38 18 C35 15 37 12 42 10 Z M43 8 L46 5 M50 15 L53 12" stroke="#f4f4f4" stroke-width="2.2" fill="none" stroke-linejoin="round"/>
</svg>
<div class="t" style="left:433px;top:1049px;font-size:23.6px;color:#f4f4f4">Launchpad</div>
<svg style="left:584px;top:1046px" width="27" height="27" viewBox="0 0 27 27"><circle cx="13.5" cy="13.5" r="11.5" stroke="#f4f4f4" stroke-width="2.3" fill="none"/><path d="M8.5 8.5 L18.5 18.5 M18.5 8.5 L8.5 18.5" stroke="#f4f4f4" stroke-width="2.3"/></svg>
<div class="t" style="left:619px;top:1049px;font-size:24px;color:#f4f4f4">0</div>
<svg style="left:640px;top:1046px" width="28" height="26" viewBox="0 0 28 26"><path d="M14 2 L26.5 24 H1.5 Z" stroke="#f4f4f4" stroke-width="2.3" fill="none" stroke-linejoin="round"/><path d="M14 9 V17 M14 19.5 V21.5" stroke="#f4f4f4" stroke-width="2.4"/></svg>
<div class="t" style="left:674px;top:1049px;font-size:24px;color:#f4f4f4">0</div>
<div class="t" style="left:824px;top:1049.5px;font-size:23.5px;letter-spacing:-0.7px;color:#f4f4f4">Spaces: 2</div>
<div class="t" style="left:957px;top:1049.5px;font-size:23.5px;letter-spacing:-0.3px;color:#f4f4f4">UTF-8</div>
<div class="t" style="left:1055px;top:1049.5px;font-size:23.3px;color:#f4f4f4;letter-spacing:-0.8px">CRLF</div>
<div class="t" style="left:1143px;top:1048px;font-size:24px;color:#f4f4f4;letter-spacing:0.5px">{ }</div>
<div class="t" style="left:1182px;top:1049px;font-size:23.1px;color:#f4f4f4">HTML</div>
<svg style="left:1278px;top:1046px" width="30" height="27" viewBox="0 0 30 27">
 <path d="M5 11 C2 11 1 14 1 17 C1 22 7 26 15 26 C23 26 29 22 29 17 C29 14 28 11 25 11 L25 8 C25 3 22 1 18.5 1 C17 1 15.5 2 15 3.5 C14.5 2 13 1 11.5 1 C8 1 5 3 5 8 Z" fill="#f4f4f4"/>
 <rect x="7" y="4.5" width="6.5" height="6.5" rx="2.5" fill="#0287d4"/><rect x="16.5" y="4.5" width="6.5" height="6.5" rx="2.5" fill="#0287d4"/>
 <rect x="10" y="15" width="2.6" height="6" rx="1.3" fill="#0287d4"/><rect x="17.4" y="15" width="2.6" height="6" rx="1.3" fill="#0287d4"/>
</svg>
<div class="t" style="left:1314px;top:1049px;font-size:23.4px;color:#f4f4f4">Finish Setup</div>
<svg style="left:1479px;top:1046px" width="27" height="27" viewBox="0 0 27 27"><circle cx="13.5" cy="13.5" r="11.5" stroke="#f4f4f4" stroke-width="2.3" fill="none"/><path d="M5.5 21.5 L21.5 5.5" stroke="#f4f4f4" stroke-width="2.3"/></svg>
<div class="t" style="left:1514px;top:1049px;font-size:23.4px;color:#f4f4f4">Port : 5500</div>
<svg style="left:1661px;top:1048px" width="31" height="22" viewBox="0 0 31 22"><path d="M2 12 L8 18 L20 3 M13 16 L15 18 L29 2" stroke="#f4f4f4" stroke-width="2.3" fill="none"/></svg>
<div class="t" style="left:1698px;top:1049px;font-size:24.3px;color:#f4f4f4">Prettier</div>
<svg style="left:1811px;top:1046px" width="26" height="28" viewBox="0 0 26 28"><path d="M4 20 V11 C4 5.5 8 2 13 2 C18 2 22 5.5 22 11 V20 L24 23 H2 Z" stroke="#f4f4f4" stroke-width="2.3" fill="none" stroke-linejoin="round"/><path d="M10 24 C10 26 11.5 27 13 27 C14.5 27 16 26 16 24" stroke="#f4f4f4" stroke-width="2.2" fill="none"/></svg>

</div>
</body></html>
